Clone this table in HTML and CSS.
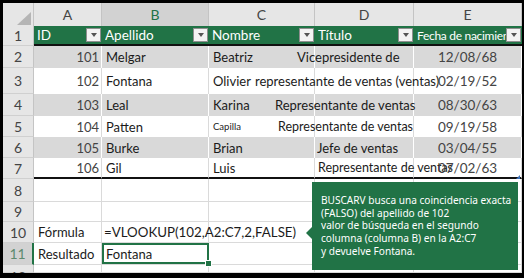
FILE: index.html
```html
<!DOCTYPE html>
<html lang="es">
<head>
<meta charset="utf-8">
<title>BUSCARV</title>
<link rel="stylesheet" href="styles.css">
</head>
<body>
<div class="sheet">
  <div class="row hrow">
    <div class="rh corner"><span class="tri"></span></div>
    <div class="ch ca">A</div>
    <div class="ch cb sel">B</div>
    <div class="ch cc">C</div>
    <div class="ch cd">D</div>
    <div class="ch ce">E</div>
  </div>
  <div class="row r1">
    <div class="rh">1</div>
    <div class="th ca"><span class="tt">ID</span><span class="flt"></span></div>
    <div class="th cb"><span class="tt">Apellido</span><span class="flt"></span></div>
    <div class="th cc"><span class="tt">Nombre</span><span class="flt"></span></div>
    <div class="th cd"><span class="tt">Título</span><span class="flt"></span></div>
    <div class="th ce"><span class="tt small">Fecha de nacimiento</span><span class="flt"></span></div>
  </div>
  <div class="row r2 band">
    <div class="rh">2</div>
    <div class="c ca num">101</div>
    <div class="c cb">Melgar</div>
    <div class="c cc">Beatriz</div>
    <div class="c cd"><span class="ti t2">Vicepresidente de</span></div>
    <div class="c ce dt">12/08/68</div>
  </div>
  <div class="row r3">
    <div class="rh">3</div>
    <div class="c ca num">102</div>
    <div class="c cb">Fontana</div>
    <div class="c cc">Olivier</div>
    <div class="c cd"><span class="ti t3">representante de ventas (ventas)</span></div>
    <div class="c ce dt">02/19/52</div>
  </div>
  <div class="row r4 band">
    <div class="rh">4</div>
    <div class="c ca num">103</div>
    <div class="c cb">Leal</div>
    <div class="c cc">Karina</div>
    <div class="c cd"><span class="ti t4">Representante de ventas</span></div>
    <div class="c ce dt">08/30/63</div>
  </div>
  <div class="row r5">
    <div class="rh">5</div>
    <div class="c ca num">104</div>
    <div class="c cb">Patten</div>
    <div class="c cc"><span class="tiny">Capilla</span></div>
    <div class="c cd"><span class="ti t5">Representante de ventas</span></div>
    <div class="c ce dt">09/19/58</div>
  </div>
  <div class="row r6 band">
    <div class="rh">6</div>
    <div class="c ca num">105</div>
    <div class="c cb">Burke</div>
    <div class="c cc">Brian</div>
    <div class="c cd"><span class="ti t6">Jefe de ventas</span></div>
    <div class="c ce dt">03/04/55</div>
  </div>
  <div class="row r7 last">
    <div class="rh">7</div>
    <div class="c ca num">106</div>
    <div class="c cb">Gil</div>
    <div class="c cc">Luis</div>
    <div class="c cd"><span class="ti t7">Representante de ventas</span></div>
    <div class="c ce dt">07/02/63<span class="rsz"></span></div>
  </div>
  <div class="row r8 plain">
    <div class="rh">8</div>
    <div class="c ca"></div><div class="c cb"></div><div class="c cc"></div><div class="c cd"></div><div class="c ce"></div>
  </div>
  <div class="row r9 plain">
    <div class="rh">9</div>
    <div class="c ca"></div><div class="c cb"></div><div class="c cc"></div><div class="c cd"></div><div class="c ce"></div>
  </div>
  <div class="row r10 plain">
    <div class="rh">10</div>
    <div class="c ca">Fórmula</div>
    <div class="c cb formula">=VLOOKUP(102,A2:C7,2,FALSE)</div>
    <div class="c cc"></div><div class="c cd"></div><div class="c ce"></div>
  </div>
  <div class="row r11 plain">
    <div class="rh rsel">11</div>
    <div class="c ca">Resultado</div>
    <div class="c cb active">Fontana<span class="handle"></span></div>
    <div class="c cc"></div><div class="c cd"></div><div class="c ce"></div>
  </div>
  <div class="row r12 plain">
    <div class="rh">12</div>
    <div class="c ca"></div><div class="c cb"></div><div class="c cc"></div><div class="c cd"></div><div class="c ce"></div>
  </div>

  <div class="tip">
    <p>BUSCARV busca una coincidencia exacta</p>
    <p>(FALSO) del apellido de 102</p>
    <p>valor de búsqueda en el segundo</p>
    <p>columna (columna B) en la A2:C7</p>
    <p>y devuelve Fontana.</p>
  </div>
</div>
</body>
</html>
```

FILE: styles.css
```css
html, body {
  margin: 0;
  padding: 0;
  background: #000;
  width: 524px;
  height: 278px;
  overflow: hidden;
}

.sheet {
  position: relative;
  width: 519px;
  height: 270px;
  margin: 3px 0 0 3px;
  background: #fff;
  overflow: hidden;
  font-family: Lato, "Liberation Sans", sans-serif;
  font-size: 13px;
  color: #1b1b1b;
}

.row {
  display: flex;
  box-sizing: border-box;
}

.row > div {
  box-sizing: border-box;
  flex: none;
  display: flex;
  align-items: center;
  white-space: nowrap;
  position: relative;
}

.rh { width: 31px; }
.ca { width: 68px; }
.cb { width: 107px; }
.cc { width: 106px; }
.cd { width: 99px; }
.ce { width: 108px; }

/* heights */
.hrow { height: 23px; }
.r1 { height: 20px; }
.r2 { height: 22px; }
.r3 { height: 26px; }
.r4 { height: 22px; }
.r5 { height: 21px; }
.r6 { height: 21px; }
.r7 { height: 21px; }
.r8 { height: 23px; }
.r9 { height: 20px; }
.r10 { height: 21px; }
.r11 { height: 22px; }
.r12 { height: 8px; }

/* column headers */
.hrow > div {
  background: #e6e6e6;
  border-right: 1px solid #c4c4c4;
  justify-content: center;
  color: #444;
  font-size: 14px;
}
.hrow .ch.sel {
  background: #d2d2d2;
  color: #217346;
}
.corner .tri {
  position: absolute;
  right: 2px;
  bottom: 1px;
  width: 0;
  height: 0;
  border-left: 14px solid transparent;
  border-bottom: 13px solid #b5b5b5;
}

/* row headers */
.rh {
  background: #e6e6e6;
  border-right: 1px solid #c4c4c4;
  border-bottom: 1px solid #d0d0d0;
  justify-content: center;
  color: #444;
  font-size: 14px;
}
.hrow .rh { border-bottom: none; }
.rh.rsel {
  background: #d2d2d2;
  color: #5d8a6e;
  border-right: 2px solid #217346;
}
.r12 .rh { align-items: flex-start; padding-top: 3px; }

/* table header row */
.th {
  background: #217346;
  color: #fff;
  border-bottom: 2px solid #111;
  padding-left: 3px;
  padding-right: 1px;
  font-size: 13.5px;
}
.th .tt {
  flex: 1;
  overflow: hidden;
  min-width: 0;
}
.th .tt.small { font-size: 12px; letter-spacing: -0.3px; }
.flt {
  flex: none;
  width: 15px;
  height: 14px;
  box-sizing: border-box;
  background: #f3f3f3;
  border: 1px solid #8e8e8e;
  display: flex;
  align-items: center;
  justify-content: center;
}
.flt::after {
  content: "";
  width: 0;
  height: 0;
  border-left: 3.5px solid transparent;
  border-right: 3.5px solid transparent;
  border-top: 4px solid #555;
}

/* data cells */
.c {
  border-right: 1px solid #dadada;
  padding-left: 4px;
}
.band { background: #d9d9d9; }
.band .c { border-right-color: #fff; }
.last .c { border-bottom: 2px solid #111; }
.plain .c { border-bottom: 1px solid #dadada; }
.num {
  justify-content: flex-end;
  padding-right: 2px;
  color: #444;
}
.dt {
  justify-content: center;
  color: #444;
  padding-left: 0;
  font-size: 13.5px;
}
.tiny { font-size: 9.5px; }

.ti { display: inline-block; }
.t2 { margin-left: -22px; }
.t3 { margin-left: -64px; }
.t4 { margin-left: -44px; }
.t5 { margin-left: -41px; font-size: 12.5px; }
.t6 { margin-left: -2px; }
.t7 { margin-left: -1px; font-size: 12.5px; }

.rsz {
  position: absolute;
  right: 1px;
  bottom: -2px;
  width: 0;
  height: 0;
  border-left: 4px solid transparent;
  border-bottom: 4px solid #3b6fb6;
}

.formula { padding-left: 2px; overflow: visible; font-size: 13.3px; }

.active {
  box-shadow: inset 0 0 0 2px #217346;
  border-right: none;
}
.handle {
  position: absolute;
  right: -3px;
  bottom: -3px;
  width: 5px;
  height: 5px;
  background: #217346;
  border: 1px solid #fff;
  z-index: 2;
}

/* tooltip */
.tip {
  position: absolute;
  left: 309px;
  top: 179px;
  width: 206px;
  height: 88px;
  box-sizing: border-box;
  background: #217346;
  color: #fff;
  font-family: "Noto Sans", "Open Sans", sans-serif;
  font-size: 10.1px;
  line-height: 12.7px;
  padding: 12px 0 0 9px;
  z-index: 3;
}
.tip::before {
  content: "";
  position: absolute;
  left: -6px;
  top: 45px;
  width: 0;
  height: 0;
  border-top: 6px solid transparent;
  border-bottom: 6px solid transparent;
  border-right: 6px solid #217346;
}
.tip p { margin: 0; white-space: nowrap; }
```
